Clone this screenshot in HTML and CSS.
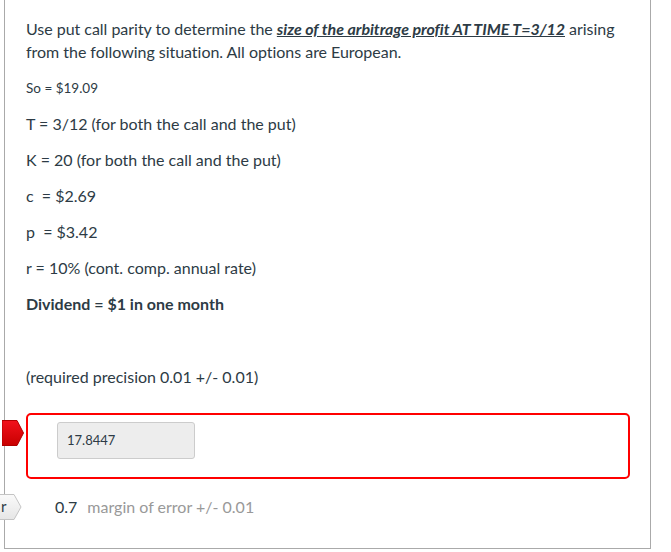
FILE: index.html
```html
<!DOCTYPE html>
<html>
<head>
<meta charset="utf-8">
<link rel="stylesheet" href="styles.css">
</head>
<body>
<div class="question">
  <p class="intro">Use put call parity to determine the <span class="em">size of the arbitrage profit AT TIME T=3/12</span> arising from the following situation. All options are European.</p>
  <p class="small">So = $19.09</p>
  <p>T = 3/12 (for both the call and the put)</p>
  <p>K = 20 (for both the call and the put)</p>
  <p>c &nbsp;= $2.69</p>
  <p>p &nbsp;= $3.42</p>
  <p>r = 10% (cont. comp. annual rate)</p>
  <p class="bold">Dividend = $1 in one month</p>
  <p class="precision">(required precision 0.01 +/- 0.01)</p>
  <div class="answer wrong">
    <svg class="tag tag-wrong" width="22" height="26" viewBox="0 0 22 26">
      <defs>
        <linearGradient id="rg" x1="0" y1="0" x2="0" y2="1">
          <stop offset="0" stop-color="#f2121c"/>
          <stop offset="1" stop-color="#c80000"/>
        </linearGradient>
      </defs>
      <path d="M0 0.5 H15 L21.5 13 L15 25.5 H0 Z" fill="url(#rg)" stroke="#b00000" stroke-width="1"/>
    </svg>
    <div class="input">17.8447</div>
  </div>
  <div class="answer correct">
    <span class="tag tag-correct">
      <svg width="22" height="26" viewBox="0 0 22 26">
        <defs>
          <linearGradient id="gg" x1="0" y1="0" x2="0" y2="1">
            <stop offset="0" stop-color="#fafafa"/>
            <stop offset="1" stop-color="#e6e6e6"/>
          </linearGradient>
        </defs>
        <path d="M-1 0.5 H14 L21 13 L14 25.5 H-1 Z" fill="url(#gg)" stroke="#c4c4c4" stroke-width="1"/>
      </svg>
      <span class="tag-text">r</span>
    </span>
    <span class="value">0.7</span>
    <span class="margin">margin of error +/- 0.01</span>
  </div>
</div>
</body>
</html>
```
FILE: styles.css
```css
html, body {
  margin: 0;
  padding: 0;
  background: #fff;
}
body {
  font-family: Lato, "Open Sans", sans-serif;
  color: #2d3b45;
}
.question {
  margin-left: 4px;
  width: 604px;
  padding: 17px 20px 29px 21px;
  border: 1px solid #aaa;
  border-top: none;
}
.question p {
  margin: 14px 0 0;
  font-size: 16px;
  line-height: 22px;
}
.question p.intro {
  margin-top: 0;
  line-height: 23px;
  letter-spacing: -0.03px;
}
.question p.small {
  font-size: 13.5px;
}
.em {
  font-weight: bold;
  font-style: italic;
  text-decoration: underline;
}
.question p.bold {
  font-weight: bold;
}
.question p.precision {
  margin-top: 51px;
}
.answer {
  position: relative;
}
.answer.wrong {
  margin-top: 25px;
  border: 2px solid #f00;
  border-radius: 5px;
  padding: 7px 29px 18px;
}
.input {
  width: 127px;
  height: 35px;
  padding: 0 0 0 9px;
  background: #ededed;
  border: 1px solid #ccc;
  border-radius: 3px;
  font-size: 13px;
  line-height: 35px;
  color: #2d3b45;
}
.tag {
  position: absolute;
  left: -26px;
  display: block;
}
.tag-wrong {
  top: 5px;
}
.tag-correct {
  top: 0;
  width: 22px;
  height: 26px;
}
.tag-correct svg {
  display: block;
}
.tag-text {
  position: absolute;
  left: 1px;
  top: 0;
  font-size: 15px;
  line-height: 25px;
  color: #2d3b45;
}
.answer.correct {
  margin-top: 15px;
  height: 25px;
  display: flex;
  align-items: center;
  padding-left: 29px;
  font-size: 16px;
}
.value {
  color: #2d3b45;
  margin-right: 10px;
}
.margin {
  color: #999;
}
```
